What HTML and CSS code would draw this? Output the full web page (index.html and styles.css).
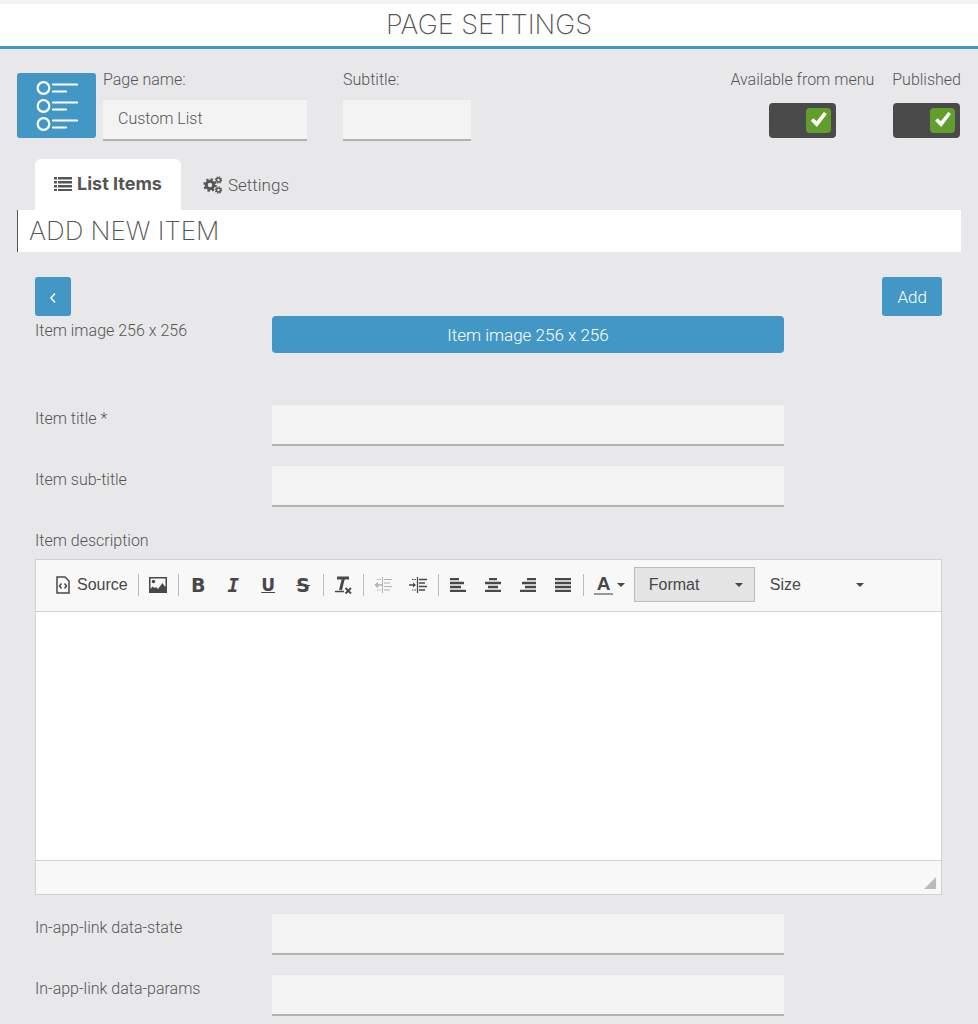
FILE: index.html
```html
<!DOCTYPE html>
<html lang="en">
<head>
    <meta charset="UTF-8">
    <meta name="viewport" content="width=device-width, initial-scale=1">
    <title>Page Settings</title>
    <link rel="stylesheet" href="styles.css">
</head>
<body>
    <header class="page-header">
        <h1>PAGE SETTINGS</h1>
    </header>

    <main class="container">
        <div class="page-info">
            <div class="page-icon">
                <svg width="42" height="52" viewBox="0 0 42 52" fill="none" stroke="#fff" stroke-width="2.200" stroke-linecap="round">
                    <circle cx="7.500" cy="8" r="5.800"/>
                    <circle cx="7.500" cy="26" r="5.800"/>
                    <circle cx="7.500" cy="44" r="5.800"/>
                    <path d="M17 4.500h24M17 11.500h13M17 22.500h24M17 29.500h13M17 40.500h24M17 47.500h13"/>
                </svg>
            </div>
            <div class="info-field name-field">
                <label for="pageName">Page name:</label>
                <input type="text" id="pageName" class="text-input" value="Custom List">
            </div>
            <div class="info-field subtitle-field">
                <label for="subtitle">Subtitle:</label>
                <input type="text" id="subtitle" class="text-input">
            </div>
            <div class="switches">
                <div class="switch-field">
                    <label for="inMenu">Available from menu</label>
                    <input type="checkbox" id="inMenu" class="switch" checked>
                </div>
                <div class="switch-field">
                    <label for="published">Published</label>
                    <input type="checkbox" id="published" class="switch" checked>
                </div>
            </div>
        </div>

        <nav class="tabs">
            <a href="#items" class="tab active">
                <svg width="18" height="14" viewBox="0 0 18 14" fill="currentColor">
                    <path d="M0 0h3v2.500H0zM4 0h14v2.500H4zM0 4h3v2.500H0zM4 4h14v2.500H4zM0 8h3v2.500H0zM4 8h14v2.500H4zM0 12h3v2H0zM4 12h14v2H4z"/>
                </svg>
                List Items
            </a>
            <a href="#settings" class="tab">
                <svg width="20" height="18" viewBox="0 0 20 18" fill="none" stroke="currentColor">
                    <circle cx="7" cy="9" r="3.700" stroke-width="3"/>
                    <circle cx="7" cy="9" r="5.800" stroke-width="2" stroke-dasharray="2.300 2.255"/>
                    <circle cx="15.500" cy="4" r="2" stroke-width="1.500"/>
                    <circle cx="15.500" cy="4" r="3.100" stroke-width="1.200" stroke-dasharray="1.300 1.134"/>
                    <circle cx="15.500" cy="14" r="2" stroke-width="1.500"/>
                    <circle cx="15.500" cy="14" r="3.100" stroke-width="1.200" stroke-dasharray="1.300 1.134"/>
                </svg>
                Settings
            </a>
        </nav>

        <h2>ADD NEW ITEM</h2>

        <form class="item-form">
            <div class="form-actions">
                <button type="button" class="btn back-btn" aria-label="Back">
                    <svg width="6" height="10" viewBox="0 0 6 10" fill="none" stroke="#fff" stroke-width="1.500">
                        <path d="M5 .5L1 5l4 4.500"/>
                    </svg>
                </button>
                <button type="submit" class="btn">Add</button>
            </div>

            <div class="form-row image-row">
                <label for="itemImage">Item image 256 x 256</label>
                <button type="button" id="itemImage" class="btn image-btn">Item image 256 x 256</button>
            </div>
            <div class="form-row">
                <label for="itemTitle">Item title *</label>
                <input type="text" id="itemTitle" class="text-input">
            </div>
            <div class="form-row">
                <label for="itemSubtitle">Item sub-title</label>
                <input type="text" id="itemSubtitle" class="text-input">
            </div>

            <label class="editor-label" for="itemDescription">Item description</label>
            <div class="editor">
                <div class="toolbar">
                    <button type="button" class="tool source-tool">
                        <svg width="14" height="18" viewBox="0 0 14 18" fill="none" stroke="currentColor" stroke-width="1.500">
                            <path d="M1 1h8l4 4v12H1z"/>
                            <path d="M5.500 7.500L3.500 10l2 2.500M8.500 7.500l2 2.500-2 2.500"/>
                        </svg>
                        Source
                    </button>
                    <span class="separator"></span>
                    <button type="button" class="tool" aria-label="Image">
                        <svg width="18" height="16" viewBox="0 0 18 16" fill="none" stroke="currentColor" stroke-width="1.500">
                            <path d="M.75.75h16.500v14.500H.75z"/>
                            <circle cx="4.500" cy="4.500" r="1.700" fill="currentColor" stroke="none"/>
                            <path d="M1 15v-2.500l2.500-3 2 1.500 1.500-1 2 2 4.500-6 2 3 1.500 1v5z" fill="currentColor" stroke="none"/>
                        </svg>
                    </button>
                    <span class="separator"></span>
                    <button type="button" class="tool letter bold" aria-label="Bold">B</button>
                    <button type="button" class="tool letter italic" aria-label="Italic">I</button>
                    <button type="button" class="tool letter underline" aria-label="Underline">U</button>
                    <button type="button" class="tool letter strike" aria-label="Strikethrough">S</button>
                    <span class="separator"></span>
                    <button type="button" class="tool" aria-label="Remove format">
                        <svg width="18" height="20" viewBox="0 0 18 20" fill="none" stroke="currentColor">
                            <path d="M3 3h12M9.500 3L6.500 15" stroke-width="3"/>
                            <path d="M1 16.500h9" stroke-width="1.500"/>
                            <path d="M11.500 13l5.500 5.500M17 13l-5.500 5.500" stroke-width="1.800"/>
                        </svg>
                    </button>
                    <span class="separator"></span>
                    <button type="button" class="tool" aria-label="Decrease indent" disabled>
                        <svg width="18" height="16" viewBox="0 0 18 16" fill="none" stroke="currentColor">
                            <path d="M8.500 0v16M10 2.500h8M10 6h6M10 9.500h8M10 13h6"/>
                            <path d="M3 2.500h1.500M5.500 2.500H7M3 13h1.500M5.500 13H7"/>
                            <path d="M2 8h6M4 5.500L1.500 8 4 10.500" stroke-width="1.500"/>
                        </svg>
                    </button>
                    <button type="button" class="tool" aria-label="Increase indent">
                        <svg width="18" height="16" viewBox="0 0 18 16" fill="none" stroke="currentColor">
                            <path d="M8.500 0v16M10 2.500h8M10 6h6M10 9.500h8M10 13h6" stroke-width="1.300"/>
                            <path d="M3 2.500h1.500M5.500 2.500H7M3 13h1.500M5.500 13H7"/>
                            <path d="M0 8h6" stroke-width="1.500"/>
                            <path d="M4 5.500l3 2.500-3 2.500z" fill="currentColor" stroke="none"/>
                        </svg>
                    </button>
                    <span class="separator"></span>
                    <button type="button" class="tool" aria-label="Align left">
                        <svg width="16" height="14" viewBox="0 0 16 14" stroke="currentColor" stroke-width="2.400">
                            <path d="M0 1h9M0 5h14M0 9h11M0 13h16"/>
                        </svg>
                    </button>
                    <button type="button" class="tool" aria-label="Center">
                        <svg width="16" height="14" viewBox="0 0 16 14" stroke="currentColor" stroke-width="2.400">
                            <path d="M4 1h8M0 5h16M3 9h10M0 13h16"/>
                        </svg>
                    </button>
                    <button type="button" class="tool" aria-label="Align right">
                        <svg width="16" height="14" viewBox="0 0 16 14" stroke="currentColor" stroke-width="2.400">
                            <path d="M7 1h9M2 5h14M5 9h11M0 13h16"/>
                        </svg>
                    </button>
                    <button type="button" class="tool" aria-label="Justify">
                        <svg width="16" height="14" viewBox="0 0 16 14" stroke="currentColor" stroke-width="2.400">
                            <path d="M0 1h16M0 5h16M0 9h16M0 13h16"/>
                        </svg>
                    </button>
                    <span class="separator"></span>
                    <button type="button" class="tool color-tool" aria-label="Text color">
                        <span class="color-letter">A</span>
                        <span class="caret"></span>
                    </button>
                    <div class="combo selected">
                        <select aria-label="Paragraph format">
                            <option>Format</option>
                        </select>
                        <span class="caret"></span>
                    </div>
                    <div class="combo">
                        <select aria-label="Font size">
                            <option>Size</option>
                        </select>
                        <span class="caret"></span>
                    </div>
                </div>
                <textarea id="itemDescription" class="editor-body"></textarea>
                <div class="editor-footer">
                    <span class="resizer"></span>
                </div>
            </div>

            <div class="form-row">
                <label for="dataState">In-app-link data-state</label>
                <input type="text" id="dataState" class="text-input">
            </div>
            <div class="form-row">
                <label for="dataParams">In-app-link data-params</label>
                <input type="text" id="dataParams" class="text-input">
            </div>
        </form>
    </main>
</body>
</html>
```
FILE: styles.css
```css
:root {
    --blue: #4397c4;
    --page-bg: #e8e8ea;
    --input-bg: #f3f3f3;
    --text: #555;
    --editor-text: #484848;
    --editor-border: #d1d1d1;
    --editor-bg: #f8f8f8;
}

* {
    margin: 0;
    padding: 0;
    box-sizing: border-box;
}

body {
    font-family: Roboto, "Liberation Sans", sans-serif;
    font-size: 16px;
    font-weight: 300;
    line-height: 22px;
    color: var(--text);
    background-color: var(--page-bg);
}

input, button, select, textarea {
    font: inherit;
    color: inherit;
}

h1, h2 {
    font-family: Inter, Roboto, sans-serif;
    font-size: 27px;
    font-weight: 200;
    line-height: 42px;
    background-color: #fff;
}

/* Header */
.page-header {
    border-top: 4px solid #f2f2f2;
    border-bottom: 3px solid var(--blue);
    text-align: center;
}

.container {
    padding: 20px 17px;
}

/* Page name, subtitle and switches */
.page-info {
    display: flex;
    align-items: flex-start;
}

.page-icon {
    display: flex;
    align-items: center;
    justify-content: center;
    width: 79px;
    height: 65px;
    margin: 4px 7px 0 0;
    border-radius: 3px;
    background-color: var(--blue);
}

.info-field label {
    display: block;
    margin-bottom: 8px;
}

.name-field {
    width: 204px;
    margin-right: 36px;
}

.subtitle-field {
    width: 128px;
}

.text-input {
    display: block;
    width: 100%;
    height: 42px;
    padding: 0 15px 3px;
    border: solid #e5e5e6;
    border-width: 1px 0 2px;
    border-bottom-color: #b2b2b2;
    background-color: var(--input-bg);
    outline: none;
}

.switches {
    display: flex;
    gap: 18px;
    margin-left: auto;
}

.switch-field {
    display: flex;
    flex-direction: column;
    align-items: center;
}

.switch {
    appearance: none;
    display: flex;
    align-items: center;
    position: relative;
    width: 67px;
    height: 35px;
    margin-top: 12px;
    padding: 0 5px;
    border-radius: 4px;
    background-color: #4a4a4a;
    cursor: pointer;
}

.switch::before {
    content: "";
    width: 25px;
    height: 25px;
    border-radius: 4px;
    background-color: #999;
}

.switch:checked::before {
    margin-left: auto;
    background-color: #629e2b;
}

.switch:checked::after {
    content: "";
    position: absolute;
    right: 9px;
    top: 9px;
    width: 16px;
    height: 15px;
    background-color: #fff;
    clip-path: polygon(0 58%, 16% 42%, 36% 62%, 82% 0, 100% 14%, 38% 100%);
}

/* Tabs */
.tabs {
    display: flex;
    margin-top: 18px;
    padding-left: 18px;
}

.tab {
    display: flex;
    align-items: center;
    gap: 5px;
    height: 51px;
    padding: 0 22px;
    font-size: 17px;
    color: var(--text);
    text-decoration: none;
}

.tab.active {
    padding: 0 19px 2px;
    border-radius: 6px 6px 0 0;
    font-family: Inter, sans-serif;
    font-size: 18px;
    font-weight: 700;
    background-color: #fff;
}

h2 {
    padding-left: 11px;
    border-left: 1px solid #555;
    font-size: 26px;
}

/* Form */
.item-form {
    padding: 25px 19px 0 18px;
}

.form-actions {
    display: flex;
    justify-content: space-between;
}

.btn {
    height: 39px;
    padding: 0 15px;
    border: none;
    border-radius: 3px;
    font-size: 17px;
    color: #fff;
    background-color: var(--blue);
    cursor: pointer;
}

.form-row {
    display: grid;
    grid-template-columns: repeat(12, 1fr);
    column-gap: 39px;
    margin-bottom: 19px;
}

.form-row label {
    grid-column: span 3;
    padding-top: 4px;
    white-space: nowrap;
}

.form-row .text-input,
.form-row .image-btn {
    grid-column: span 7;
}

.image-row {
    margin-bottom: 51px;
}

.image-btn {
    height: 37px;
    border-radius: 4px;
}

.editor-label {
    display: block;
    padding: 4px 0 7px;
}

/* Editor */
.editor {
    margin-bottom: 18px;
    border: 1px solid var(--editor-border);
    color: var(--editor-text);
    background-color: #fff;
}

.toolbar {
    display: flex;
    flex-wrap: wrap;
    align-items: center;
    padding: 7px 12px 9px;
    border-bottom: 1px solid var(--editor-border);
    font-family: "Liberation Sans", Arial, sans-serif;
    font-size: 16px;
    font-weight: 400;
    background-color: var(--editor-bg);
}

.tool {
    display: flex;
    align-items: center;
    justify-content: center;
    width: 35px;
    height: 35px;
    border: none;
    background: none;
    cursor: pointer;
}

.tool:disabled {
    opacity: 0.4;
    cursor: default;
}

.source-tool {
    gap: 7px;
    width: auto;
    padding: 0 8px;
}

.separator {
    width: 1px;
    height: 22px;
    margin: 0 2px;
    background-color: #bbb;
}

.letter {
    font-family: "DejaVu Sans", sans-serif;
    font-size: 19px;
    font-weight: 700;
}

.italic {
    font-family: "DejaVu Sans Mono", monospace;
    font-style: italic;
}

.underline {
    font-size: 17px;
    text-decoration: underline;
}

.strike {
    text-decoration: line-through;
}

.color-tool {
    gap: 4px;
    width: 48px;
}

.color-letter {
    width: 19px;
    border-bottom: 2px solid #999;
    font-size: 19px;
    font-weight: 700;
    line-height: 18px;
}

.caret {
    border: 4px solid transparent;
    border-top-color: currentColor;
    border-bottom: none;
}

.combo {
    display: flex;
    align-items: center;
    position: relative;
    width: 121px;
    height: 35px;
    border: 1px solid transparent;
}

.combo.selected {
    border-color: #bcbcbc;
    background-color: #e5e5e5;
}

.combo select {
    appearance: none;
    width: 100%;
    height: 100%;
    padding: 0 14px;
    border: none;
    background: none;
    outline: none;
}

.combo .caret {
    position: absolute;
    right: 11px;
    pointer-events: none;
}

.editor-body {
    display: block;
    width: 100%;
    height: 248px;
    padding: 20px;
    border: none;
    outline: none;
    resize: none;
}

.editor-footer {
    display: flex;
    align-items: flex-end;
    justify-content: flex-end;
    height: 34px;
    padding: 5px;
    border-top: 1px solid var(--editor-border);
    background-color: var(--editor-bg);
}

.resizer {
    border: 6px solid #bcbcbc;
    border-top-color: transparent;
    border-left-color: transparent;
    cursor: se-resize;
}

/* Responsive */
@media (max-width: 768px) {
    .page-info {
        flex-wrap: wrap;
        gap: 12px;
    }

    .form-row .text-input,
    .form-row .image-btn,
    .form-row label {
        grid-column: 1 / -1;
    }
}
```
